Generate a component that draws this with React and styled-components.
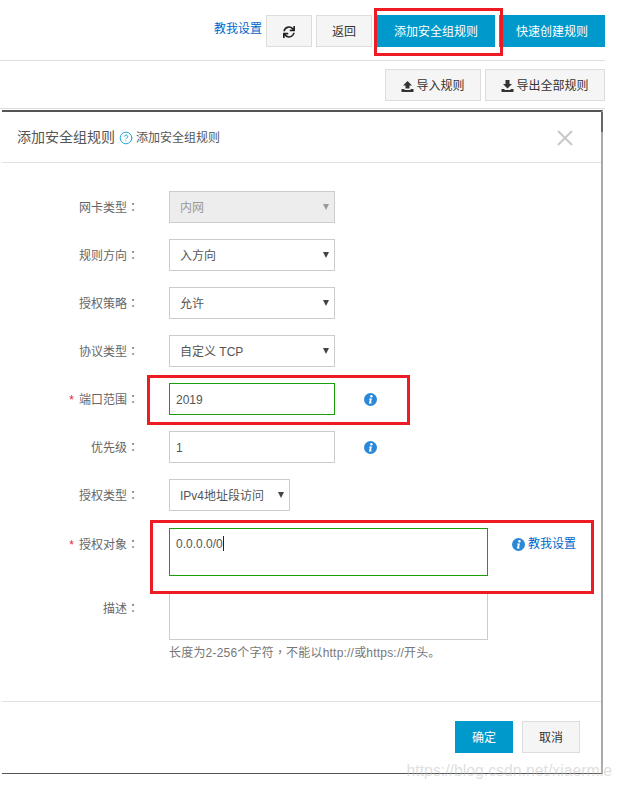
import React from 'react';
import styled, { createGlobalStyle } from 'styled-components';
import { FaSync } from 'react-icons/fa';
import { CircleHelp } from 'lucide-react';

const GlobalStyle = createGlobalStyle`
  html, body {
    margin: 0;
    padding: 0;
    background: #fff;
  }
  * {
    box-sizing: border-box;
  }
`;

const Page = styled.div`
  position: relative;
  width: 621px;
  height: 788px;
  overflow: hidden;
  background: #fff;
  color: #555;
  font: 12px/1.5 "Liberation Sans", "Noto Sans CJK SC", sans-serif;
`;

const TopBar = styled.div`
  display: flex;
  align-items: flex-start;
  justify-content: flex-end;
  width: 605px;
  height: 61px;
  padding-top: 15px;
  border-bottom: 1px solid #ddd;
`;

const SubBar = styled.div`
  display: flex;
  justify-content: flex-end;
  gap: 4px;
  width: 605px;
  height: 48px;
  padding-top: 8px;
  border-bottom: 1px solid #ddd;
`;

const HelpLink = styled.a`
  color: #0066cc;
  margin-right: 4px;
  line-height: 29px;
`;

const Button = styled.button`
  display: flex;
  align-items: center;
  justify-content: center;
  gap: 2px;
  width: ${p => p.$w}px;
  height: 32px;
  margin-left: ${p => p.$ml || 0}px;
  padding: 2px 0 0;
  border: 1px solid ${p => (p.$primary ? '#0099cc' : '#ddd')};
  background: ${p => (p.$primary ? '#0099cc' : '#f5f5f5')};
  color: ${p => (p.$primary ? '#fff' : '#333')};
  font: inherit;
`;

const Modal = styled.div`
  position: relative;
  display: flex;
  flex-direction: column;
  width: 601px;
  height: 664px;
  margin: 1px 0 0 2px;
  border-top: 2px solid #555;
  border-bottom: 1px solid #555;
  border-right: 2px solid #aaa;
  &::after {
    content: '';
    position: absolute;
    top: 0;
    right: -2px;
    width: 2px;
    height: 20px;
    background: #666;
  }
`;

const ModalHeader = styled.div`
  display: flex;
  align-items: center;
  flex-shrink: 0;
  height: 51px;
  padding: 1px 27px 0 15px;
  border-bottom: 1px solid #e1e1e1;
`;

const Title = styled.span`
  font-size: 14px;
  color: #555;
`;

const TitleTip = styled.span`
  display: flex;
  align-items: center;
  gap: 3px;
  flex: 1;
  margin-left: 4px;
  color: #555;
`;

const ModalBody = styled.div`
  flex: 1;
  padding-top: 28px;
`;

const Row = styled.div`
  display: flex;
  align-items: flex-start;
  height: ${p => p.$h || 32}px;
  margin-bottom: ${p => p.$mb || 16}px;
`;

const Label = styled.label`
  flex-shrink: 0;
  width: 137px;
  height: 32px;
  margin-right: 30px;
  padding-top: 1px;
  text-align: right;
  line-height: 32px;
  color: #666;
`;

const Star = styled.span`
  color: #e5262b;
  margin-right: 5px;
`;

// the reference's full-width punctuation sits centred in its cell
const Punct = styled.span`
  font-family: "Noto Sans CJK TC", sans-serif;
  line-height: 1;
`;

const SelectWrap = styled.div`
  position: relative;
  width: ${p => p.$w || 166}px;
  height: 32px;
`;

const Select = styled.select`
  appearance: none;
  width: 100%;
  height: 100%;
  padding: 2px 0 0 10px;
  border: 1px solid #ccc;
  border-radius: 0;
  background: ${p => (p.disabled ? '#ededed' : '#fff')};
  color: ${p => (p.disabled ? '#999' : '#555')};
  opacity: 1;
  font: inherit;
`;

const Arrow = styled.span`
  position: absolute;
  top: 13px;
  right: 6px;
  width: 0;
  height: 0;
  border-left: 3.5px solid transparent;
  border-right: 3.5px solid transparent;
  border-top: 6px solid ${p => (p.$muted ? '#999' : '#444')};
`;

const Input = styled.input`
  width: 166px;
  height: 32px;
  padding: 2px 6px 0;
  border: 1px solid ${p => (p.$valid ? '#1a9e0a' : '#ccc')};
  border-radius: 0;
  color: #555;
  font: inherit;
  outline: none;
`;

const TextBox = styled.div`
  width: 319px;
  height: 48px;
  padding: 5px 6px;
  border: 1px solid ${p => (p.$valid ? '#1a9e0a' : '#ccc')};
  color: #555;
  line-height: 20px;
`;

const Caret = styled.span`
  display: inline-block;
  width: 1px;
  height: 15px;
  vertical-align: -3px;
  background: #222;
`;

const InfoSlot = styled.span`
  display: flex;
  align-items: center;
  height: 32px;
  margin-left: ${p => p.$ml}px;
  gap: 3px;
  color: #0066cc;
`;

const Hint = styled.div`
  margin: -12px 0 0 167px;
  color: #777;
  letter-spacing: 0.2px;
`;

const ModalFooter = styled.div`
  display: flex;
  justify-content: flex-end;
  gap: 9px;
  flex-shrink: 0;
  height: 72px;
  padding: 19px 21px 0 0;
  border-top: 1px solid #e1e1e1;
`;

const RedBox = styled.div`
  position: absolute;
  left: ${p => p.$x}px;
  top: ${p => p.$y}px;
  width: ${p => p.$w}px;
  height: ${p => p.$h}px;
  border: 3px solid #ed1c24;
`;

const Watermark = styled.div`
  position: absolute;
  right: 9px;
  top: 760px;
  font: 15.8px/22px "Liberation Sans", sans-serif;
  color: rgba(190, 190, 190, 0.5);
  white-space: nowrap;
`;

const Upload = () => (
  <svg width="13" height="12" viewBox="0 0 13 12" fill="#333">
    <path d="M6.5 1 11 5.5H8.5V8.5h-4V5.5H2zM0.5 9H3.5V10H9.5V9H12.5V12H0.5z" />
  </svg>
);

const Download = () => (
  <svg width="13" height="12" viewBox="0 0 13 12" fill="#333">
    <path d="M4.5 0h4V4H11L6.5 8.5 2 4H4.5zM0.5 9H3.5V10H9.5V9H12.5V12H0.5z" />
  </svg>
);

const Info = () => (
  <svg width="13" height="13" viewBox="0 0 13 13">
    <circle cx="6.5" cy="6.5" r="6.5" fill="#2b88d8" />
    <circle cx="7.4" cy="3.2" r="1.2" fill="#fff" />
    <path d="M5.2 5.4H8L6.9 9.6H7.9L7.6 10.6H4.8L5.9 6.4H5z" fill="#fff" />
  </svg>
);

const CloseIcon = () => (
  <svg width="18" height="18" viewBox="0 0 18 18" stroke="#c8c8c8" strokeWidth="2" fill="none">
    <path d="M2 2 16 16M16 2 2 16" />
  </svg>
);

const Colon = () => <Punct>：</Punct>;

const selects = [
  { label: '网卡类型', value: '内网', disabled: true },
  { label: '规则方向', value: '入方向' },
  { label: '授权策略', value: '允许' },
  { label: '协议类型', value: '自定义 TCP' },
];

const App = () => (
  <Page>
    <GlobalStyle />
    <TopBar>
      <HelpLink>教我设置</HelpLink>
      <Button $w={46}><FaSync size={12} color="#222" /></Button>
      <Button $w={56} $ml={4}>返回</Button>
      <Button $w={118} $ml={5} $primary>添加安全组规则</Button>
      <Button $w={106} $ml={4} $primary>快速创建规则</Button>
    </TopBar>
    <SubBar>
      <Button $w={96}><Upload />导入规则</Button>
      <Button $w={120}><Download />导出全部规则</Button>
    </SubBar>

    <Modal>
      <ModalHeader>
        <Title>添加安全组规则</Title>
        <TitleTip>
          <CircleHelp size={14} color="#1aa3d6" strokeWidth={1.6} />
          添加安全组规则
        </TitleTip>
        <CloseIcon />
      </ModalHeader>

      <ModalBody>
        {selects.map(s => (
          <Row key={s.label}>
            <Label>{s.label}<Colon /></Label>
            <SelectWrap>
              <Select disabled={s.disabled} defaultValue={s.value}>
                <option>{s.value}</option>
              </Select>
              <Arrow $muted={s.disabled} />
            </SelectWrap>
          </Row>
        ))}
        <Row>
          <Label><Star>*</Star>端口范围<Colon /></Label>
          <Input $valid defaultValue="2019" />
          <InfoSlot $ml={29}><Info /></InfoSlot>
        </Row>
        <Row>
          <Label>优先级<Colon /></Label>
          <Input defaultValue="1" />
          <InfoSlot $ml={29}><Info /></InfoSlot>
        </Row>
        <Row $mb={17}>
          <Label>授权类型<Colon /></Label>
          <SelectWrap $w={121}>
            <Select defaultValue="IPv4地址段访问">
              <option>IPv4地址段访问</option>
            </Select>
            <Arrow />
          </SelectWrap>
        </Row>
        <Row $h={48}>
          <Label><Star>*</Star>授权对象<Colon /></Label>
          <TextBox $valid>0.0.0.0/0<Caret /></TextBox>
          <InfoSlot $ml={24}><Info />教我设置</InfoSlot>
        </Row>
        <Row $h={48}>
          <Label>描述<Colon /></Label>
          <TextBox />
        </Row>
        <Hint>长度为2-256个字符<Punct>，</Punct>不能以http://或https://开头。</Hint>
      </ModalBody>

      <ModalFooter>
        <Button $w={58} $primary>确定</Button>
        <Button $w={58}>取消</Button>
      </ModalFooter>
    </Modal>

    <RedBox $x={374} $y={8} $w={129} $h={48} />
    <RedBox $x={147} $y={375} $w={263} $h={50} />
    <RedBox $x={150} $y={520} $w={444} $h={74} />
    <Watermark>https://blog.csdn.net/xiaermie</Watermark>
  </Page>
);

export default App;
